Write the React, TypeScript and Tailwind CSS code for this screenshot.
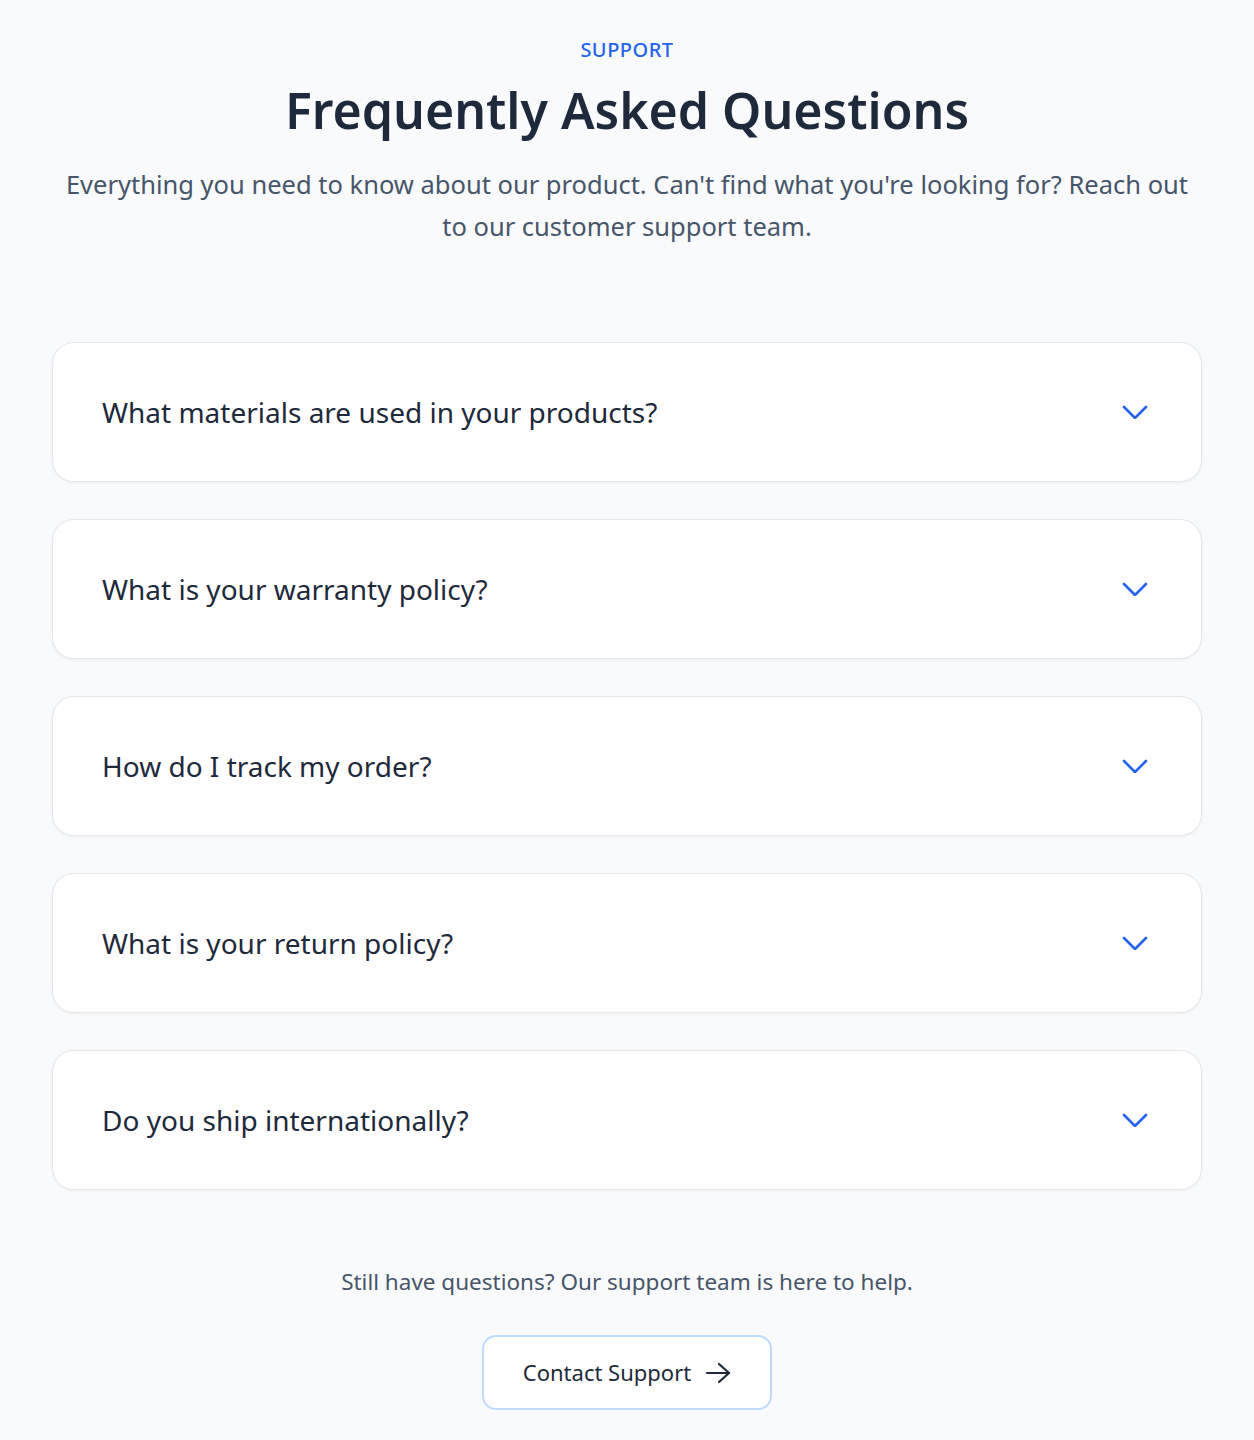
import React from "react";

const questions = [
  "What materials are used in your products?",
  "What is your warranty policy?",
  "How do I track my order?",
  "What is your return policy?",
  "Do you ship internationally?",
];

function Chevron() {
  return (
    <svg width="26" height="14" viewBox="0 0 26 14" fill="none" stroke="#2563eb" strokeWidth="2.6" strokeLinecap="round" strokeLinejoin="round">
      <path d="M2 2l11 11 11-11" />
    </svg>
  );
}

function Arrow() {
  return (
    <svg width="26" height="22" viewBox="0 0 26 22" fill="none" stroke="#1f2937" strokeWidth="2.2" strokeLinecap="round" strokeLinejoin="round">
      <path d="M2 11h22" />
      <path d="M14 2l10 9-10 9" />
    </svg>
  );
}

export default function App() {
  return (
    <div className="min-h-[1440px] bg-[#f8fafc] px-[52px] pt-[36px] pb-[30px]" style={{ fontFamily: '"Noto Sans", sans-serif' }}>
      <div className="flex flex-col items-center text-center">
        <div className="text-[20px] font-medium tracking-wide text-[#2563eb] leading-[28px]">SUPPORT</div>
        <h1 className="mt-[16px] text-[50px] font-semibold leading-[60px] text-[#1e293b]">Frequently Asked Questions</h1>
        <p className="mt-[23px] text-[25.5px] leading-[42px] text-[#475569] max-w-[1126px]">
          Everything you need to know about our product. Can't find what you're looking for? Reach out to our customer support team.
        </p>
      </div>
      <div className="mt-[95px] flex flex-col gap-[37px]">
        {questions.map((q) => (
          <div key={q} className="flex h-[140px] items-center justify-between rounded-[22px] border border-[#e5e7eb] bg-white pl-[49px] pr-[53px] shadow-[0_1px_3px_rgba(0,0,0,0.06)]">
            <span className="text-[28px] text-[#1e293b]">{q}</span>
            <Chevron />
          </div>
        ))}
      </div>
      <div className="mt-[76px] flex flex-col items-center">
        <p className="text-[22.5px] text-[#475569] leading-[32px]">Still have questions? Our support team is here to help.</p>
        <button className="mt-[37px] flex h-[75px] w-[290px] items-center justify-center gap-[14px] rounded-[14px] border-2 border-[#bfdbfe] bg-white text-[22px] text-[#1e293b]">
          Contact Support
          <Arrow />
        </button>
      </div>
    </div>
  );
}
